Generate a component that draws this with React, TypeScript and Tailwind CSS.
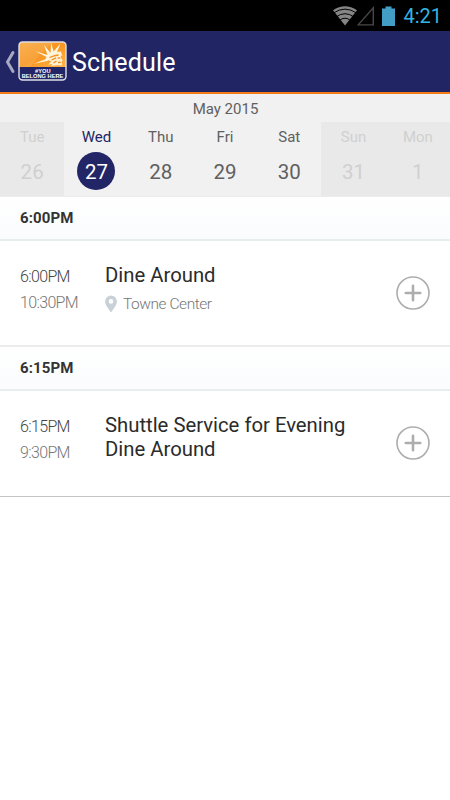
import clsx from "clsx";

type Day = { name: string; date: number; state: "disabled" | "selected" | "open" };

type Session = {
  start: string;
  end: string;
  title: string;
  place?: string;
};

const DAYS: Day[] = [
  { name: "Tue", date: 26, state: "disabled" },
  { name: "Wed", date: 27, state: "selected" },
  { name: "Thu", date: 28, state: "open" },
  { name: "Fri", date: 29, state: "open" },
  { name: "Sat", date: 30, state: "open" },
  { name: "Sun", date: 31, state: "disabled" },
  { name: "Mon", date: 1, state: "disabled" },
];

const SESSIONS: Session[] = [
  { start: "6:00PM", end: "10:30PM", title: "Dine Around", place: "Towne Center" },
  { start: "6:15PM", end: "9:30PM", title: "Shuttle Service for Evening Dine Around" },
];

function StatusBar() {
  return (
    <div className="flex h-[31px] items-center justify-end bg-black pr-[8px]">
      <svg width="26" height="20" viewBox="0 0 26 20" fill="none">
        <path d="M1 4.2Q13-3.6 25 4.2L13 19.6Z" fill="#858585" />
        <path
          d="M1.2 7.2Q13-1 24.8 7.2M4 11Q13 4.4 22 11M7.2 14.6Q13 9.8 18.8 14.6"
          stroke="#000"
          strokeWidth="1"
        />
      </svg>
      <svg className="-ml-px" width="18" height="20" viewBox="0 0 18 20" fill="none">
        <path d="M16.3 1.8V18.9H1.2Z" stroke="#484848" strokeWidth="1.4" />
      </svg>
      <svg className="ml-[7px]" width="13" height="20" viewBox="0 0 13 20">
        <path d="M3.5 0.5h6V2.4H13V20H0V2.4h3.5Z" fill="#429ec5" />
      </svg>
      <span className="ml-[8px] text-[20px] leading-none text-[#33b5e5]">4:21</span>
    </div>
  );
}

function Logo() {
  return (
    <svg width="49" height="40" viewBox="0 0 49 40">
      <defs>
        <linearGradient id="sun" x1="0" y1="0" x2="1" y2="1">
          <stop offset="0" stopColor="#f9a93d" />
          <stop offset="0.5" stopColor="#f8951f" />
          <stop offset="1" stopColor="#fdb64a" />
        </linearGradient>
        <clipPath id="frame">
          <rect x="1" y="1" width="47" height="38" rx="3" />
        </clipPath>
      </defs>
      <g clipPath="url(#frame)">
        <path d="M0 0h49v40H0Z" fill="#222566" />
        <path d="M0 0h49v26H0Z" fill="url(#sun)" />
        <path d="M0 0h36L22 14 12 26H0Z" fill="#fff" opacity="0.12" />
        {/* crown rays */}
        <path
          d="M17.5 10.2L29.5 14 26 4 32.6 12 33 1.5 35.6 10.6 42.5 2.5 39 11 36 14 33 17.5 29 20 16 22.8 27.5 18.2 28.5 16Z"
          fill="#fff6e2"
        />
        {/* hair and face */}
        <path
          d="M32 14.2L38 11 43 10.5 44 14 42.6 16 44.6 19.5 43.6 21 44 24.5 40 24 33 25 34.5 23 30 23.5 33.5 20.5 30 19Z"
          fill="#fff1d2"
        />
        <path
          d="M31.5 16.5L36 14.8 40.5 14M33.5 19L38 16.8M35.5 22L38.5 20M39.6 17.2L42.4 16.8M40 21.5L42.8 21.4"
          stroke="#f38f1c"
          strokeWidth="1.3"
          fill="none"
        />
      </g>
      <text
        textAnchor="middle"
        fontSize="5.7"
        fontWeight="700"
        fill="#fff"
        className="font-['Liberation_Sans',sans-serif]"
      >
        <tspan x="24.8" y="31.9">#YOU</tspan>
        <tspan x="24.5" y="37.3">BELONG HERE</tspan>
      </text>
      <rect x="1" y="1" width="47" height="38" rx="3.5" fill="none" stroke="#dedfe9" strokeWidth="1.4" />
    </svg>
  );
}

function Header() {
  return (
    <header className="flex h-[63px] items-center border-b-2 border-[#f57c14] bg-[#222564] pl-[4px]">
      <svg width="12" height="24" viewBox="0 0 12 24" fill="none">
        <path d="M9 2.5L3.5 12 9 21.5" stroke="#a7a8c1" strokeWidth="3" strokeLinecap="round" />
      </svg>
      <div className="mb-px ml-[2px]">
        <Logo />
      </div>
      <h1 className="mt-[2px] ml-[5px] text-[25px] leading-none tracking-[0.2px] text-white">Schedule</h1>
    </header>
  );
}

function DayCell({ day }: { day: Day }) {
  return (
    <button
      type="button"
      className={clsx(
        "flex h-full flex-col items-center pt-[6px]",
        day.state === "disabled" && "bg-[#e9e9e9] text-[#d0d0d0]",
        day.state === "selected" && "text-[#222566]",
        day.state === "open" && "text-[#606060]"
      )}
    >
      <span className="text-[15px] leading-[18px]">{day.name}</span>
      <span
        className={clsx(
          "mt-[6px] flex size-[38px] items-center justify-center rounded-full pt-[2px] text-[20.5px] leading-none",
          day.state === "selected" && "bg-[#222566] text-white"
        )}
      >
        {day.date}
      </span>
    </button>
  );
}

function Calendar() {
  return (
    <div className="flex h-[103px] flex-col border-b border-[#ececec] bg-[#f1f1f1]">
      <div className="h-[28px] pt-[6px] pl-px text-center text-[15px] leading-[18px] text-[#606060]">
        May 2015
      </div>
      <div className="grid flex-1 grid-cols-7">
        {DAYS.map((day) => (
          <DayCell key={day.date} day={day} />
        ))}
      </div>
    </div>
  );
}

function PinIcon() {
  return (
    <svg width="12" height="18" viewBox="0 0 12 18">
      <path
        fillRule="evenodd"
        d="M6 0.5A5.9 5.9 0 0 0 0.1 6.4C0.1 10 3.2 13 6 17.5 8.8 13 11.9 10 11.9 6.4A5.9 5.9 0 0 0 6 0.5ZM6 4.1A2.3 2.3 0 1 1 6 8.7 2.3 2.3 0 0 1 6 4.1Z"
        fill="#c8d0d8"
      />
    </svg>
  );
}

function SessionBlock({ session }: { session: Session }) {
  return (
    <section className="group">
      <h2 className="h-[44px] border-b-2 border-[#e8eded] bg-linear-to-b from-white to-[#fafcfd] pt-[12px] pl-[20px] text-[15px] leading-[18px] font-bold tracking-[0.1px] text-[#333]">
        {session.start}
      </h2>
      <div className="flex h-[106px] border-b-2 border-[#ececec] bg-white pt-[23px] pl-[20px] group-last:border-b group-last:border-[#c4c4c4]">
        <div className="w-[85px] text-[16px] leading-[26px] font-light tracking-[-0.65px]">
          <div className="text-[#444]">{session.start}</div>
          <div className="text-[#777]">{session.end}</div>
        </div>
        <div className="w-[260px]">
          <div className="text-[20.3px] leading-[23.5px] text-[#2b2b2b]">{session.title}</div>
          {session.place && (
            <div className="mt-[6px] flex items-center gap-[6px] text-[15.5px] leading-[20px] font-light tracking-[-0.45px] text-[#777]">
              <PinIcon />
              {session.place}
            </div>
          )}
        </div>
        <button type="button" aria-label="Add" className="ml-[30px] self-start pt-[11px]">
          <svg width="36" height="36" viewBox="0 0 36 36" fill="none">
            <circle cx="18" cy="18" r="16" stroke="#adadad" strokeWidth="1.6" />
            <path d="M18 10.8V25.2M10.8 18H25.2" stroke="#adadad" strokeWidth="2.6" strokeLinecap="round" />
          </svg>
        </button>
      </div>
    </section>
  );
}

export default function App() {
  return (
    <div className="h-[800px] w-[450px] overflow-hidden bg-white font-['Roboto',sans-serif]">
      <StatusBar />
      <Header />
      <Calendar />
      <main>
        {SESSIONS.map((session) => (
          <SessionBlock key={session.start} session={session} />
        ))}
      </main>
    </div>
  );
}
